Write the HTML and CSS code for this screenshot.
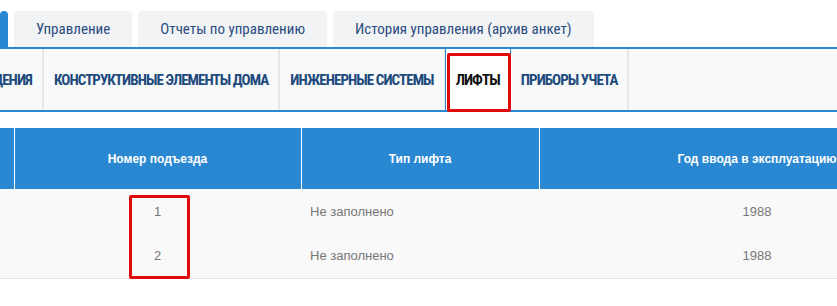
FILE: index.html
```html
<!DOCTYPE html>
<html lang="ru">
<head>
<meta charset="utf-8">
<title>Лифты</title>
<link rel="stylesheet" href="styles.css">
</head>
<body>
<div class="page">
  <nav class="top-tabs">
    <div class="top-tab top-tab--active"><span>Паспорт</span></div>
    <div class="top-tab">Управление</div>
    <div class="top-tab">Отчеты по управлению</div>
    <div class="top-tab">История управления (архив анкет)</div>
  </nav>
  <nav class="sub-tabs">
    <div class="sub-tab sub-tab--cut">ОБЩИЕ СВЕДЕНИЯ</div>
    <div class="sub-tab">КОНСТРУКТИВНЫЕ ЭЛЕМЕНТЫ ДОМА</div>
    <div class="sub-tab">ИНЖЕНЕРНЫЕ СИСТЕМЫ</div>
    <div class="sub-tab sub-tab--active">ЛИФТЫ<span class="mark mark--tab"></span></div>
    <div class="sub-tab">ПРИБОРЫ УЧЕТА</div>
    <div class="sub-tab-fill"></div>
  </nav>
  <div class="table-wrap">
    <table class="grid">
      <colgroup>
        <col class="c0"><col class="c1"><col class="c2"><col class="c3"><col class="c4">
      </colgroup>
      <thead>
        <tr>
          <th>№</th>
          <th>Номер подъезда</th>
          <th>Тип лифта</th>
          <th>Год ввода в эксплуатацию</th>
          <th>Срок службы</th>
        </tr>
      </thead>
      <tbody>
        <tr>
          <td class="center"></td>
          <td class="center">1</td>
          <td class="left">Не заполнено</td>
          <td class="center">1988</td>
          <td class="center"></td>
        </tr>
        <tr>
          <td class="center"></td>
          <td class="center">2</td>
          <td class="left">Не заполнено</td>
          <td class="center">1988</td>
          <td class="center"></td>
        </tr>
      </tbody>
    </table>
  </div>
  <div class="mark mark--cells"></div>
</div>
</body>
</html>
```
FILE: styles.css
```css
html, body {
  margin: 0;
  padding: 0;
  background: #ffffff;
}
body {
  width: 837px;
  height: 306px;
  overflow: hidden;
  font-family: "Liberation Sans", Arial, sans-serif;
}
.page {
  position: relative;
  width: 837px;
  height: 306px;
  overflow: hidden;
}

/* top tabs */
.top-tabs {
  display: flex;
  gap: 6px;
  padding-top: 11px;
  border-bottom: 2px solid #2a88d2;
  font-family: "Roboto Condensed", "Liberation Sans", sans-serif;
}
.top-tab {
  height: 36px;
  display: flex;
  align-items: center;
  padding: 0 22px;
  background: #f2f3f5;
  color: #2b4c7e;
  font-size: 15px;
  border-radius: 4px 4px 0 0;
  white-space: nowrap;
}
.top-tab--active {
  width: 8px;
  padding: 0;
  background: #2a88d2;
  overflow: hidden;
  justify-content: flex-end;
  color: #ffffff;
}
.top-tab--active span {
  padding-right: 20px;
}

/* sub tabs */
.sub-tabs {
  display: flex;
  height: 61px;
  background: #f8f9fb;
  border-bottom: 2px solid #2a88d2;
  font-family: "Roboto Condensed", "Liberation Sans", sans-serif;
}
.sub-tab {
  position: relative;
  display: flex;
  align-items: center;
  padding: 0 10px;
  border-right: 2px solid #e7e8ea;
  color: #204a7b;
  font-size: 15px;
  font-weight: bold;
  letter-spacing: -0.92px;
  white-space: nowrap;
}
.sub-tab--cut {
  width: 32px;
  padding: 0 10px 0 0;
  overflow: hidden;
  justify-content: flex-end;
}
.sub-tab--active {
  background: #ffffff;
  color: #111111;
  border-left: 1px solid #2a88d2;
  border-right: 1px solid #2a88d2;
  margin-left: -1px;
}
.sub-tab-fill {
  flex: 1;
}

/* table */
.table-wrap {
  margin-top: 16px;
  margin-left: -46px;
}
.grid {
  border-collapse: collapse;
  table-layout: fixed;
  width: 1077px;
  font-size: 12px;
}
.c0 { width: 60px; }
.c1 { width: 287px; }
.c2 { width: 238px; }
.c3 { width: 436px; }
.c4 { width: 56px; }
.grid th {
  height: 61px;
  padding: 0 8px;
  background: #2a88d2;
  color: #ffffff;
  font-weight: bold;
  text-align: center;
  border-left: 1px solid #ffffff;
  white-space: nowrap;
  overflow: hidden;
}
.grid th:first-child {
  border-left: 0;
}
.grid tbody tr {
  background: #f9f9f9;
}
.grid td {
  height: 44px;
  padding: 0 9px;
  color: #777777;
  font-size: 13px;
}
.grid tbody tr:last-child td {
  height: 45px;
  border-bottom: 1px solid #e4e4e4;
}
.center { text-align: center; }
.left { text-align: left; }

/* red annotation marks */
.mark {
  position: absolute;
  border: 3px solid #e0090b;
  border-radius: 2px;
  box-sizing: border-box;
}
.mark--tab {
  left: 1px;
  right: -1px;
  top: 4px;
  bottom: -2px;
}
.mark--cells {
  left: 129px;
  top: 195px;
  width: 61px;
  height: 84px;
}
```
